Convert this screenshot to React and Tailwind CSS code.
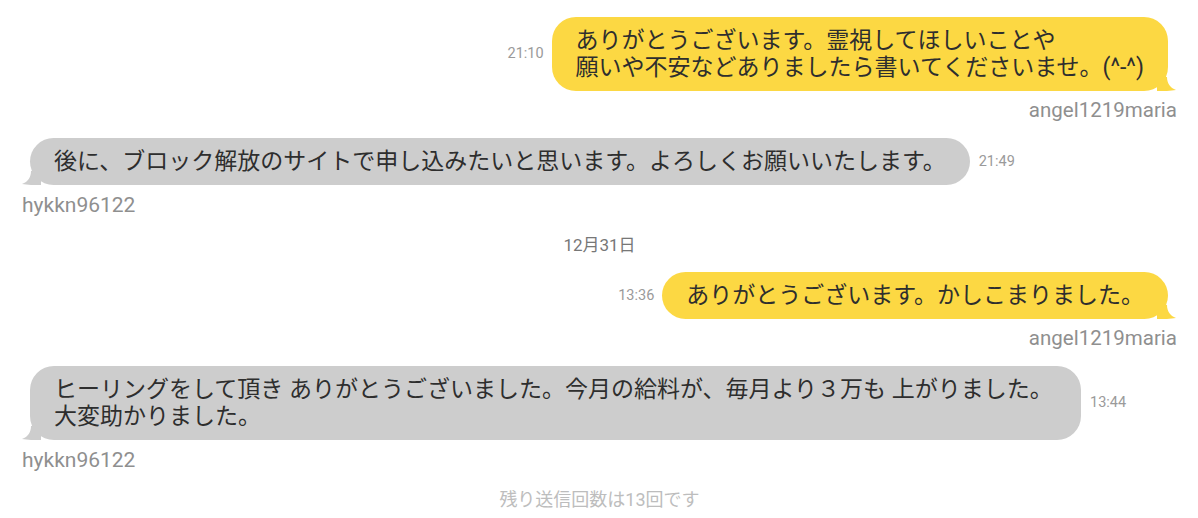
import React from "react";

const font = { fontFamily: '"Roboto", "Noto Sans CJK JP", sans-serif' };

function TailRight({ color }) {
  return (
    <svg
      className="absolute right-[-9px] bottom-0"
      width="20"
      height="14"
      viewBox="0 0 20 14"
    >
      <path d="M0 0 L10 0 C10 6 13 11 19 13 C14 14 6 14 0 14 Z" fill={color} />
    </svg>
  );
}

function TailLeft({ color }) {
  return (
    <svg
      className="absolute left-[-9px] bottom-0"
      width="20"
      height="14"
      viewBox="0 0 20 14"
    >
      <path d="M20 0 L10 0 C10 6 7 11 1 13 C6 14 14 14 20 14 Z" fill={color} />
    </svg>
  );
}

function Mine({ time, children }) {
  return (
    <div className="flex flex-col items-end">
      <div className="flex items-center gap-2 pr-[9px]">
        <span className="text-[14.5px] text-[#9a9a9a]">{time}</span>
        <div className="relative rounded-[24px] bg-[#fcd843] px-6 py-[10px] text-[23px] leading-[27px] text-[#2e2e2e]">
          {children}
          <TailRight color="#fcd843" />
        </div>
      </div>
      <div className="mt-[8px] text-[20.5px] leading-[22px] text-[#8f8f8f]">
        angel1219maria
      </div>
    </div>
  );
}

function Theirs({ time, width, children }) {
  return (
    <div className="flex flex-col items-start">
      <div className="flex items-center gap-[9px] pl-[8px]">
        <div
          className={`relative rounded-[24px] bg-[#cdcdcd] px-6 py-[10px] text-[23px] leading-[27px] text-[#2e2e2e] ${width}`}
        >
          {children}
          <TailLeft color="#cdcdcd" />
        </div>
        <span className="text-[14.5px] text-[#9a9a9a]">{time}</span>
      </div>
      <div className="mt-[9px] text-[21px] leading-[22px] text-[#8f8f8f]">
        hykkn96122
      </div>
    </div>
  );
}

export default function App() {
  return (
    <div
      className="w-[1198px] h-[518px] bg-white pl-[22px] pr-[21px] pt-[17px] overflow-hidden"
      style={font}
    >
      <Mine time="21:10">
        ありがとうございます。霊視してほしいことや
        <br />
        願いや不安などありましたら書いてくださいませ。(^-^)
      </Mine>

      <div className="mt-[17px]">
        <Theirs time="21:49" width="">
          後に、ブロック解放のサイトで申し込みたいと思います。よろしくお願いいたします。
        </Theirs>
      </div>

      <div className="mt-[18px] text-center text-[17px] leading-[22px] text-[#777]">
        12月31日
      </div>

      <div className="mt-[16px]">
        <Mine time="13:36">ありがとうございます。かしこまりました。</Mine>
      </div>

      <div className="mt-[17px]">
        <Theirs time="13:44" width="w-[1051px]">
          ヒーリングをして頂き ありがとうございました。今月の給料が、毎月より３万も 上がりました。
          <br />
          大変助かりました。
        </Theirs>
      </div>

      <div className="mt-[18px] text-center text-[18px] leading-[22px] text-[#bdbdbd]">
        残り送信回数は13回です
      </div>
    </div>
  );
}
